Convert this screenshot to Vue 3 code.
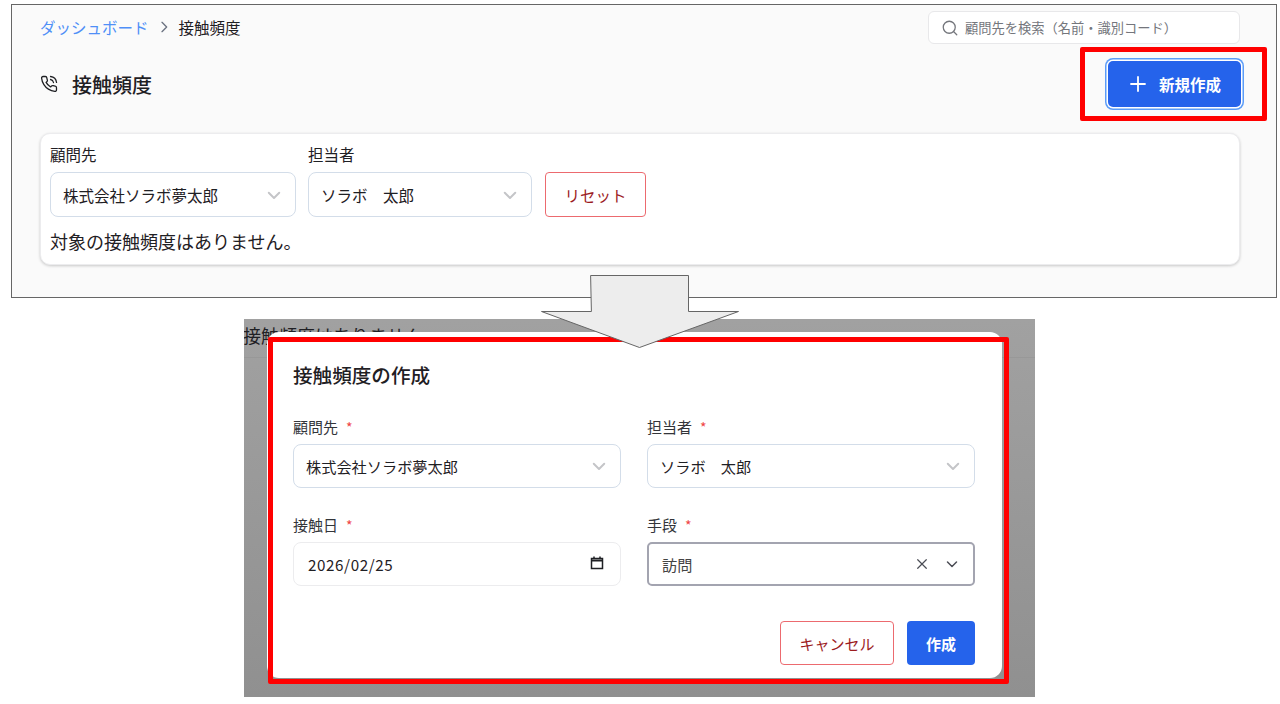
<script setup>
const topFilters = [
  { label: '顧問先', value: '株式会社ソラボ夢太郎', width: 246 },
  { label: '担当者', value: 'ソラボ　太郎', width: 224 },
]
const formFields = [
  { label: '顧問先', value: '株式会社ソラボ夢太郎', type: 'select' },
  { label: '担当者', value: 'ソラボ　太郎', type: 'select' },
  { label: '接触日', value: '2026/02/25', type: 'date' },
  { label: '手段', value: '訪問', type: 'active' },
]
</script>

<template>
  <div class="slide">
    <section class="page">
      <div class="top-row">
        <nav class="crumbs">
          <a>ダッシュボード</a>
          <svg width="16" height="16" viewBox="0 0 24 24" class="crumb-sep"><path d="M9 5l7 7-7 7" /></svg>
          <span>接触頻度</span>
        </nav>
        <div class="search">
          <svg width="18" height="18" viewBox="0 0 24 24" class="search-icon"><circle cx="11" cy="11" r="8" /><path d="M21 21l-4.3-4.3" /></svg>
          <span>顧問先を検索（名前・識別コード）</span>
        </div>
      </div>

      <div class="title-row">
        <h1>
          <svg width="18" height="18" viewBox="0 0 24 24" class="phone">
            <path d="M22 16.92v3a2 2 0 0 1-2.18 2 19.79 19.79 0 0 1-8.63-3.07 19.5 19.5 0 0 1-6-6 19.79 19.79 0 0 1-3.07-8.67A2 2 0 0 1 4.11 2h3a2 2 0 0 1 2 1.72 12.84 12.84 0 0 0 .7 2.81 2 2 0 0 1-.45 2.11L8.09 9.91a16 16 0 0 0 6 6l1.27-1.27a2 2 0 0 1 2.11-.45 12.84 12.84 0 0 0 2.81.7A2 2 0 0 1 22 16.92z" />
            <path d="M14.05 2a9 9 0 0 1 8 7.94" />
            <path d="M14.05 6A5 5 0 0 1 18 10" />
          </svg>
          接触頻度
        </h1>
        <button class="new-btn" type="button">
          <svg width="20" height="20" viewBox="0 0 20 20"><path d="M10 3v14M3 10h14" /></svg>
          新規作成
        </button>
      </div>

      <div class="card">
        <div class="filters">
          <div v-for="f in topFilters" :key="f.label" class="filter" :style="{ width: f.width + 'px' }">
            <label>{{ f.label }}</label>
            <div class="select">
              <span>{{ f.value }}</span>
              <svg width="18" height="18" viewBox="0 0 24 24" class="chev"><path d="M5 9l7 7 7-7" /></svg>
            </div>
          </div>
          <button class="reset" type="button">リセット</button>
        </div>
        <p class="empty">対象の接触頻度はありません。</p>
      </div>
    </section>

    <section class="dimmed">
      <div class="behind">接触頻度はありません。</div>
      <div class="modal">
        <h2>接触頻度の作成</h2>
        <div class="form-grid">
          <div v-for="f in formFields" :key="f.label" class="field">
            <label>{{ f.label }}<em>*</em></label>
            <div class="control" :class="f.type">
              <span>{{ f.value }}</span>
              <svg v-if="f.type === 'select'" width="18" height="18" viewBox="0 0 24 24" class="chev"><path d="M5 9l7 7 7-7" /></svg>
              <svg v-if="f.type === 'date'" width="16" height="16" viewBox="0 0 16 16" class="cal">
                <path d="M2.5 3.500h11v10h-11z" /><path d="M2.500 5.500h11" stroke-width="2" /><path d="M5 1.500v2M11 1.500v2" />
              </svg>
              <template v-if="f.type === 'active'">
                <svg width="14" height="14" viewBox="0 0 14 14" class="clear"><path d="M2 2l10 10M12 2L2 12" /></svg>
                <svg width="14" height="14" viewBox="0 0 14 14" class="open"><path d="M2.500 5l4.500 4.500L11.500 5" /></svg>
              </template>
            </div>
          </div>
        </div>
        <div class="actions">
          <button class="cancel" type="button">キャンセル</button>
          <button class="create" type="button">作成</button>
        </div>
      </div>
    </section>

    <!-- callouts pasted over the screenshots -->
    <div class="mark mark-top"></div>
    <div class="mark mark-modal"></div>
    <svg class="arrow" width="200" height="76" viewBox="0 0 200 76">
      <path d="M50 .5h97.500v36h50L98.500 72.500 .5 36.500H50z" />
    </svg>
  </div>
</template>

<style>
body {
  background: #fff;
}
</style>

<style scoped>
.slide {
  position: relative;
  width: 1280px;
  height: 704px;
  overflow: hidden;
  font-family: "Noto Sans CJK JP", "Noto Sans", sans-serif;
  color: #1f2024;
}
button {
  font-family: inherit;
}
svg {
  fill: none;
  stroke: currentColor;
  stroke-linecap: round;
  stroke-linejoin: round;
  flex: none;
}

.page {
  position: absolute;
  left: 11px;
  top: 4px;
  width: 1266px;
  height: 294px;
  box-sizing: border-box;
  border: 1px solid #666;
  background: #fafafa;
  padding: 6px 36px 0 28px;
}
.top-row {
  display: flex;
  justify-content: space-between;
  align-items: center;
  height: 33px;
}
.crumbs {
  display: flex;
  align-items: center;
  font-size: 15.500px;
  margin-top: -2px;
}
.crumbs a {
  color: #4f8ff7;
}
.crumb-sep {
  margin: 0 7px 0 7px;
  color: #6b7280;
  stroke-width: 2;
}
.search {
  width: 312px;
  height: 33px;
  box-sizing: border-box;
  border: 1px solid #e8e8ea;
  border-radius: 6px;
  background: #fff;
  display: flex;
  align-items: center;
  padding-left: 12px;
  gap: 6px;
  font-size: 13.250px;
  color: #74767c;
}
.search-icon {
  color: #74767c;
  stroke-width: 1.7;
}
.title-row {
  display: flex;
  justify-content: space-between;
  align-items: center;
  margin-top: 17px;
  height: 46px;
}
h1 {
  margin: 0;
  display: flex;
  align-items: center;
  gap: 14px;
  font-size: 20px;
  font-weight: 500;
}
.phone {
  stroke-width: 1.7;
  margin-bottom: 1px;
}
.new-btn {
  width: 133px;
  height: 46px;
  margin-right: -1px;
  border: 0;
  border-radius: 5px;
  background: #2563eb;
  color: #fff;
  box-shadow: 0 0 0 1.500px #fff, 0 0 0 3px #5b9cf8;
  display: flex;
  align-items: center;
  justify-content: center;
  gap: 11px;
  font-size: 15.500px;
  font-weight: 700;
}
.new-btn svg {
  stroke-width: 1.8;
}
.card {
  margin-top: 26px;
  height: 132px;
  box-sizing: border-box;
  padding: 10px 9px;
  background: #fff;
  border: 1px solid #ececee;
  border-radius: 10px;
  box-shadow: 0 1px 3px rgba(0, 0, 0, 0.2);
}
.filters {
  display: flex;
  align-items: flex-end;
  gap: 12px;
}
.filter label {
  display: block;
  height: 28px;
  line-height: 20px;
  font-size: 15.500px;
}
.select {
  height: 45px;
  box-sizing: border-box;
  border: 1px solid #d3dde9;
  border-radius: 8px;
  background: #fff;
  display: flex;
  align-items: center;
  justify-content: space-between;
  padding: 0 12px;
  font-size: 15.500px;
}
.chev {
  color: #c4c5c8;
  stroke-width: 2.6;
}
.reset {
  width: 101px;
  height: 45px;
  margin-left: 1px;
  border: 1px solid #ec6a6f;
  border-radius: 4px;
  background: #fff;
  color: #9c1c1f;
  font-size: 15.500px;
}
.empty {
  margin: 11px 0 0;
  font-size: 18px;
  line-height: 26px;
}

.dimmed {
  position: absolute;
  left: 244px;
  top: 319px;
  width: 791px;
  height: 378px;
  overflow: hidden;
  background: linear-gradient(#a1a1a1, #909090);
}
.behind {
  height: 38px;
  line-height: 33px;
  font-size: 18px;
  margin-left: -1px;
  border-bottom: 1px solid #989898;
}
.modal {
  position: absolute;
  left: 23px;
  top: 13px;
  width: 735px;
  height: 346px;
  box-sizing: border-box;
  padding: 28px 27px 0 26px;
  background: #fff;
  border-radius: 12px;
}
h2 {
  margin: 0;
  font-size: 19.600px;
  font-weight: 500;
  line-height: 30px;
}
.form-grid {
  display: grid;
  grid-template-columns: 328px 328px;
  column-gap: 26px;
  row-gap: 25px;
  margin-top: 25px;
}
.field label {
  display: block;
  height: 29px;
  line-height: 24px;
  font-size: 15px;
  color: #33353a;
}
.field em {
  margin-left: 8px;
  color: #ef4444;
  font-style: normal;
  font-size: 14px;
}
.control {
  height: 44px;
  box-sizing: border-box;
  border-radius: 8px;
  background: #fff;
  display: flex;
  align-items: center;
  justify-content: space-between;
  padding: 0 12px;
  font-size: 15.200px;
}
.control.select {
  border: 1px solid #d3dde9;
}
.control.date {
  border: 1px solid #ececee;
  padding: 0 15px 0 14px;
  letter-spacing: 0.6px;
}
.control.active {
  border: 2px solid #a3a4b0;
  border-radius: 5px;
  padding: 0 14px 0 13px;
  color: #444;
}
.cal {
  color: #1f2024;
  stroke-width: 1.5;
  stroke-linecap: butt;
  stroke-linejoin: miter;
  margin-bottom: 2px;
}
.clear {
  width: 12px;
  height: 12px;
  margin-left: auto;
  color: #4b4d55;
  stroke-width: 1.4;
}
.open {
  margin-left: 17px;
  color: #4b4d55;
  stroke-width: 1.5;
}
.actions {
  display: flex;
  justify-content: flex-end;
  gap: 13px;
  margin-top: 35px;
}
.cancel {
  width: 114px;
  height: 44px;
  border: 1px solid #ec6a6f;
  border-radius: 4px;
  background: #fff;
  color: #9c1c1f;
  font-size: 15px;
}
.create {
  width: 68px;
  height: 44px;
  border: 0;
  border-radius: 4px;
  background: #2563eb;
  color: #fff;
  font-size: 15px;
  font-weight: 700;
}

.mark {
  position: absolute;
  box-sizing: border-box;
  border: 5px solid #ff0000;
  border-radius: 2px;
}
.mark-top {
  left: 1080px;
  top: 47px;
  width: 187px;
  height: 74px;
}
.mark-modal {
  left: 268px;
  top: 337px;
  width: 741px;
  height: 347px;
}
.arrow {
  position: absolute;
  left: 541px;
  top: 275px;
  fill: #ededed;
  stroke: #666;
}
</style>
